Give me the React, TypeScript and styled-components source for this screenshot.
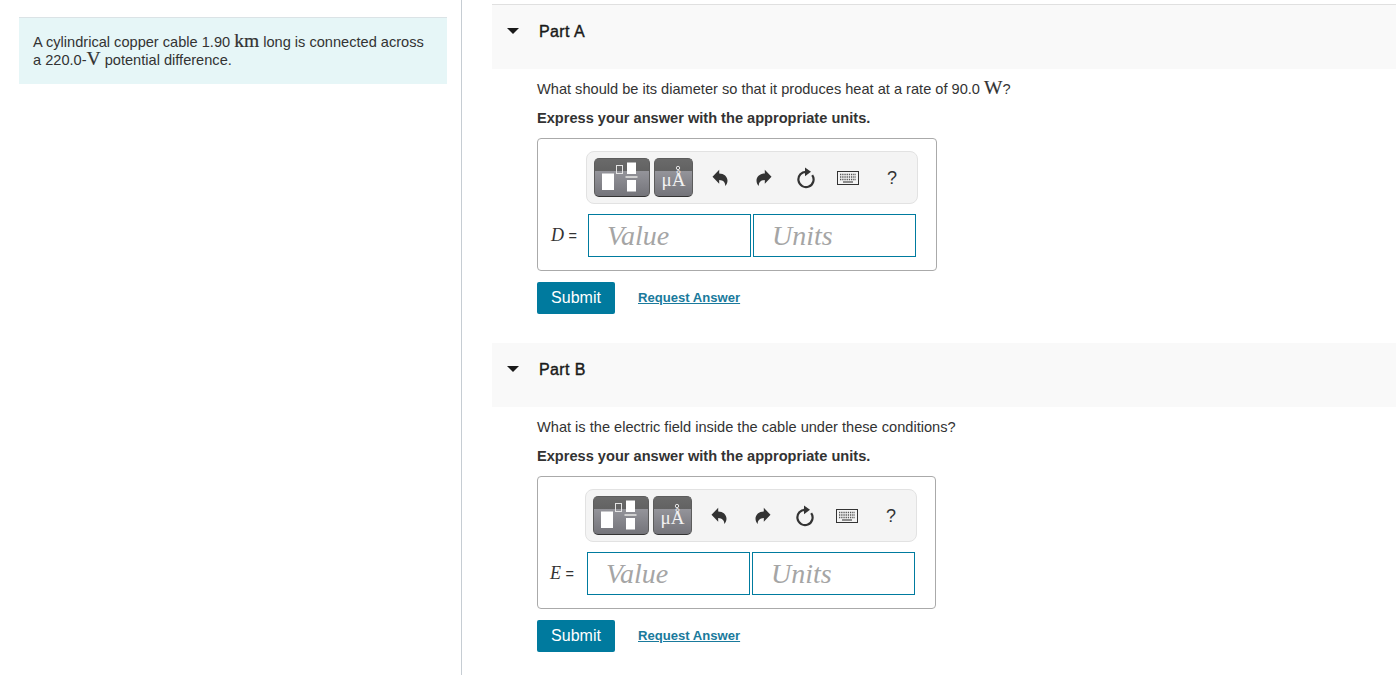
import React from 'react'
import styled, { createGlobalStyle } from 'styled-components'

const GlobalStyle = createGlobalStyle`
  html, body {
    margin: 0;
    padding: 0;
    background: #ffffff;
    overflow: hidden;
  }
  body {
    font-family: "Liberation Sans", Arial, sans-serif;
    font-size: 14px;
    color: #333333;
  }
`

const Page = styled.div`
  display: flex;
  height: 675px;
  overflow: hidden;
`

const LeftColumn = styled.aside`
  box-sizing: border-box;
  width: 462px;
  flex: none;
  padding: 17px 14px 0 19px;
  border-right: 1px solid #c6cdd3;
`

const ProblemBox = styled.div`
  box-sizing: border-box;
  height: 67px;
  padding: 15px 14px 0;
  background: #e6f6f7;
  border-top: 1px solid #dbe3e6;
  font-size: 14.6px;
  line-height: 18px;
  color: #333333;
`

const MathText = styled.span`
  font-family: "Liberation Serif", "Times New Roman", serif;
  font-size: 19.5px;
  line-height: 0;
  -webkit-text-stroke: 0.2px #333333;
`

const RightColumn = styled.main`
  flex: 1;
  padding: 4px 0 0 30px;
`

const PartHeader = styled.div<{ $first?: boolean }>`
  position: relative;
  box-sizing: content-box;
  height: 47px;
  padding: 17px 0 0 47px;
  background: #f9f9f9;
  border-top: ${p => (p.$first ? '1px solid #e0e0e0' : '0')};
  font-size: 16px;
  line-height: 19px;
  letter-spacing: 0.4px;
  color: #1a1a1a;
  -webkit-text-stroke: 0.4px #1a1a1a;
`

const Caret = styled.span`
  position: absolute;
  left: 15px;
  top: 23px;
  width: 0;
  height: 0;
  border-left: 6.5px solid transparent;
  border-right: 6.5px solid transparent;
  border-top: 6.5px solid #1a1a1a;
`

const PartBody = styled.section`
  padding: 11px 0 29px 45px;
`

const Question = styled.p`
  margin: 0;
  height: 29px;
  font-size: 14.6px;
  line-height: 19px;
  color: #333333;
`

const Instruction = styled.p`
  margin: 0;
  height: 29px;
  font-size: 14.6px;
  line-height: 19px;
  font-weight: 700;
  color: #333333;
`

const AnswerBox = styled.div<{ $width: number; $inset: number }>`
  box-sizing: border-box;
  width: ${p => p.$width}px;
  height: 133px;
  padding: 12px 0 0 ${p => p.$inset}px;
  border: 1px solid #aaaaaa;
  border-radius: 4px;
`

const Toolbar = styled.div`
  box-sizing: border-box;
  width: 332px;
  height: 53px;
  display: flex;
  align-items: center;
  padding: 0 0 0 7px;
  background: #f4f4f4;
  border: 1px solid #e2e2e2;
  border-radius: 8px;
`

const TemplateButton = styled.div<{ $width: number }>`
  box-sizing: border-box;
  position: relative;
  flex: none;
  width: ${p => p.$width}px;
  height: 39px;
  margin-right: 4px;
  border-radius: 5px;
  border: 1px solid #5c5c5c;
  border-bottom-color: #333333;
  background: linear-gradient(#6a6a6a 0, #626262 12px, #94949a 12px, #74747a 100%);
  overflow: hidden;
  display: flex;
  justify-content: center;
`

const UnitGlyph = styled.span`
  font-family: "Liberation Serif", "Times New Roman", serif;
  font-size: 19px;
  line-height: 20px;
  margin-top: 11px;
  color: #f2f2f2;
`

const TemplateIcon = styled.svg`
  width: 54px;
  height: 37px;
  display: block;
`

const RingIcon = styled.svg`
  position: absolute;
  left: 20px;
  top: 6px;
  width: 6px;
  height: 6px;
`

const ToolIcon = styled.button<{ $gap: number }>`
  flex: none;
  width: 24px;
  height: 24px;
  margin-left: ${p => p.$gap}px;
  padding: 0;
  border: 0;
  background: none;
  display: flex;
  align-items: center;
  justify-content: center;
  color: #333333;
`

const Help = styled.span`
  font-family: "Liberation Sans", Arial, sans-serif;
  font-size: 18px;
  line-height: 24px;
  color: #333333;
`

const InputRow = styled.div`
  display: flex;
  align-items: center;
  margin: 10px 0 0 -36px;
`

const VarLabel = styled.span`
  box-sizing: border-box;
  width: 38px;
  flex: none;
  padding-left: 1px;
  font-family: "Liberation Serif", "Times New Roman", serif;
  font-size: 18px;
  color: #333333;
  white-space: nowrap;
`

const Equals = styled.span`
  font-family: "Liberation Sans", Arial, sans-serif;
  font-size: 14.5px;
`

const Field = styled.div`
  box-sizing: border-box;
  flex: none;
  width: 163px;
  height: 43px;
  margin-right: 2px;
  padding-left: 18px;
  border: 1px solid #007b9f;
  font-family: "Liberation Serif", "Times New Roman", serif;
  font-style: italic;
  font-size: 28px;
  line-height: 41px;
  color: #a5a5a5;
`

const Actions = styled.div`
  display: flex;
  align-items: center;
  margin-top: 11px;
`

const SubmitButton = styled.button`
  width: 78px;
  height: 32px;
  padding: 0;
  border: 0;
  border-radius: 2px;
  background: #007a9e;
  color: #ffffff;
  font-family: "Liberation Sans", Arial, sans-serif;
  font-size: 16px;
`

const RequestLink = styled.a`
  margin: 0 0 2px 23px;
  font-size: 13.1px;
  font-weight: 700;
  color: #1a7a9c;
  text-decoration: underline;
`

const Undo = () => (
  <svg width="16" height="18" viewBox="0 0 16 18">
    <path
      d="M0.5 7.8 7.2 0.8V4.5C12 4.5 15.5 7.7 15.5 11.7 15.5 13.7 14.5 15.7 13.2 17 13.5 13.7 11.5 11.2 7.2 11V14.7Z"
      fill="currentColor"
    />
  </svg>
)

const Redo = () => (
  <svg width="16" height="18" viewBox="0 0 16 18">
    <path
      d="M15.5 7.8 8.8 0.8V4.5C4 4.5 0.5 7.7 0.5 11.7 0.5 13.7 1.5 15.7 2.8 17 2.5 13.7 4.5 11.2 8.8 11V14.7Z"
      fill="currentColor"
    />
  </svg>
)

const Reset = () => (
  <svg width="20" height="22" viewBox="0 0 20 22">
    <path d="M10.5 4.9A7.6 7.6 0 1 0 16.2 8.1" fill="none" stroke="currentColor" strokeWidth="2.2" />
    <path d="M9 0.6 15 4.8 9 9.2Z" fill="currentColor" />
  </svg>
)

const Keyboard = () => (
  <svg width="22" height="14" viewBox="0 0 22 14">
    <rect x="0.5" y="0.5" width="21" height="13" fill="#f4f4f4" stroke="#333333" />
    <path d="M3 3.5h16M3 6h16M3 8.5h16" stroke="#555555" strokeWidth="1.3" strokeDasharray="1.3 .9" />
    <path d="M6 11h10" stroke="#555555" strokeWidth="1.3" />
  </svg>
)

interface PartProps {
  name: string
  variable: string
  boxWidth: number
  inset: number
  first?: boolean
  children: React.ReactNode
}

const Part: React.FC<PartProps> = ({ name, variable, boxWidth, inset, first, children }) => (
  <>
    <PartHeader $first={first}>
      <Caret />
      {name}
    </PartHeader>
    <PartBody>
      <Question>{children}</Question>
      <Instruction>Express your answer with the appropriate units.</Instruction>
      <AnswerBox $width={boxWidth} $inset={inset}>
        <Toolbar>
          <TemplateButton $width={56}>
            <TemplateIcon viewBox="1 1 54 37">
              <rect x="8" y="15.5" width="12" height="16.5" fill="#ffffff" />
              <rect x="22.5" y="7.5" width="6" height="8" fill="none" stroke="#e4e4e4" strokeWidth="1" />
              <rect x="33" y="4.5" width="9" height="11.5" fill="#ffffff" />
              <rect x="31.5" y="18" width="12" height="2" fill="#d0d0d0" />
              <rect x="33" y="22" width="9" height="11.5" fill="#ffffff" />
            </TemplateIcon>
          </TemplateButton>
          <TemplateButton $width={39}>
            <UnitGlyph>μÅ</UnitGlyph>
            <RingIcon viewBox="0 0 6 6">
              <circle cx="3" cy="3" r="1.7" fill="none" stroke="#e4e4e4" />
            </RingIcon>
          </TemplateButton>
          <ToolIcon $gap={11} aria-label="Undo"><Undo /></ToolIcon>
          <ToolIcon $gap={20} aria-label="Redo"><Redo /></ToolIcon>
          <ToolIcon $gap={18} aria-label="Reset"><Reset /></ToolIcon>
          <ToolIcon $gap={18} aria-label="Keyboard"><Keyboard /></ToolIcon>
          <ToolIcon $gap={20} aria-label="Help"><Help>?</Help></ToolIcon>
        </Toolbar>
        <InputRow>
          <VarLabel><i>{variable}</i> <Equals>=</Equals></VarLabel>
          <Field>Value</Field>
          <Field>Units</Field>
        </InputRow>
      </AnswerBox>
      <Actions>
        <SubmitButton>Submit</SubmitButton>
        <RequestLink href="#">Request Answer</RequestLink>
      </Actions>
    </PartBody>
  </>
)

const App: React.FC = () => (
  <Page>
    <GlobalStyle />
    <LeftColumn>
      <ProblemBox>
        A cylindrical copper cable 1.90 <MathText>km</MathText> long is connected across
        <br />
        a 220.0-<MathText>V</MathText> potential difference.
      </ProblemBox>
    </LeftColumn>
    <RightColumn>
      <Part name="Part A" variable="D" boxWidth={400} inset={48} first>
        What should be its diameter so that it produces heat at a rate of 90.0 <MathText>W</MathText>?
      </Part>
      <Part name="Part B" variable="E" boxWidth={399} inset={47}>
        What is the electric field inside the cable under these conditions?
      </Part>
    </RightColumn>
  </Page>
)

export default App
